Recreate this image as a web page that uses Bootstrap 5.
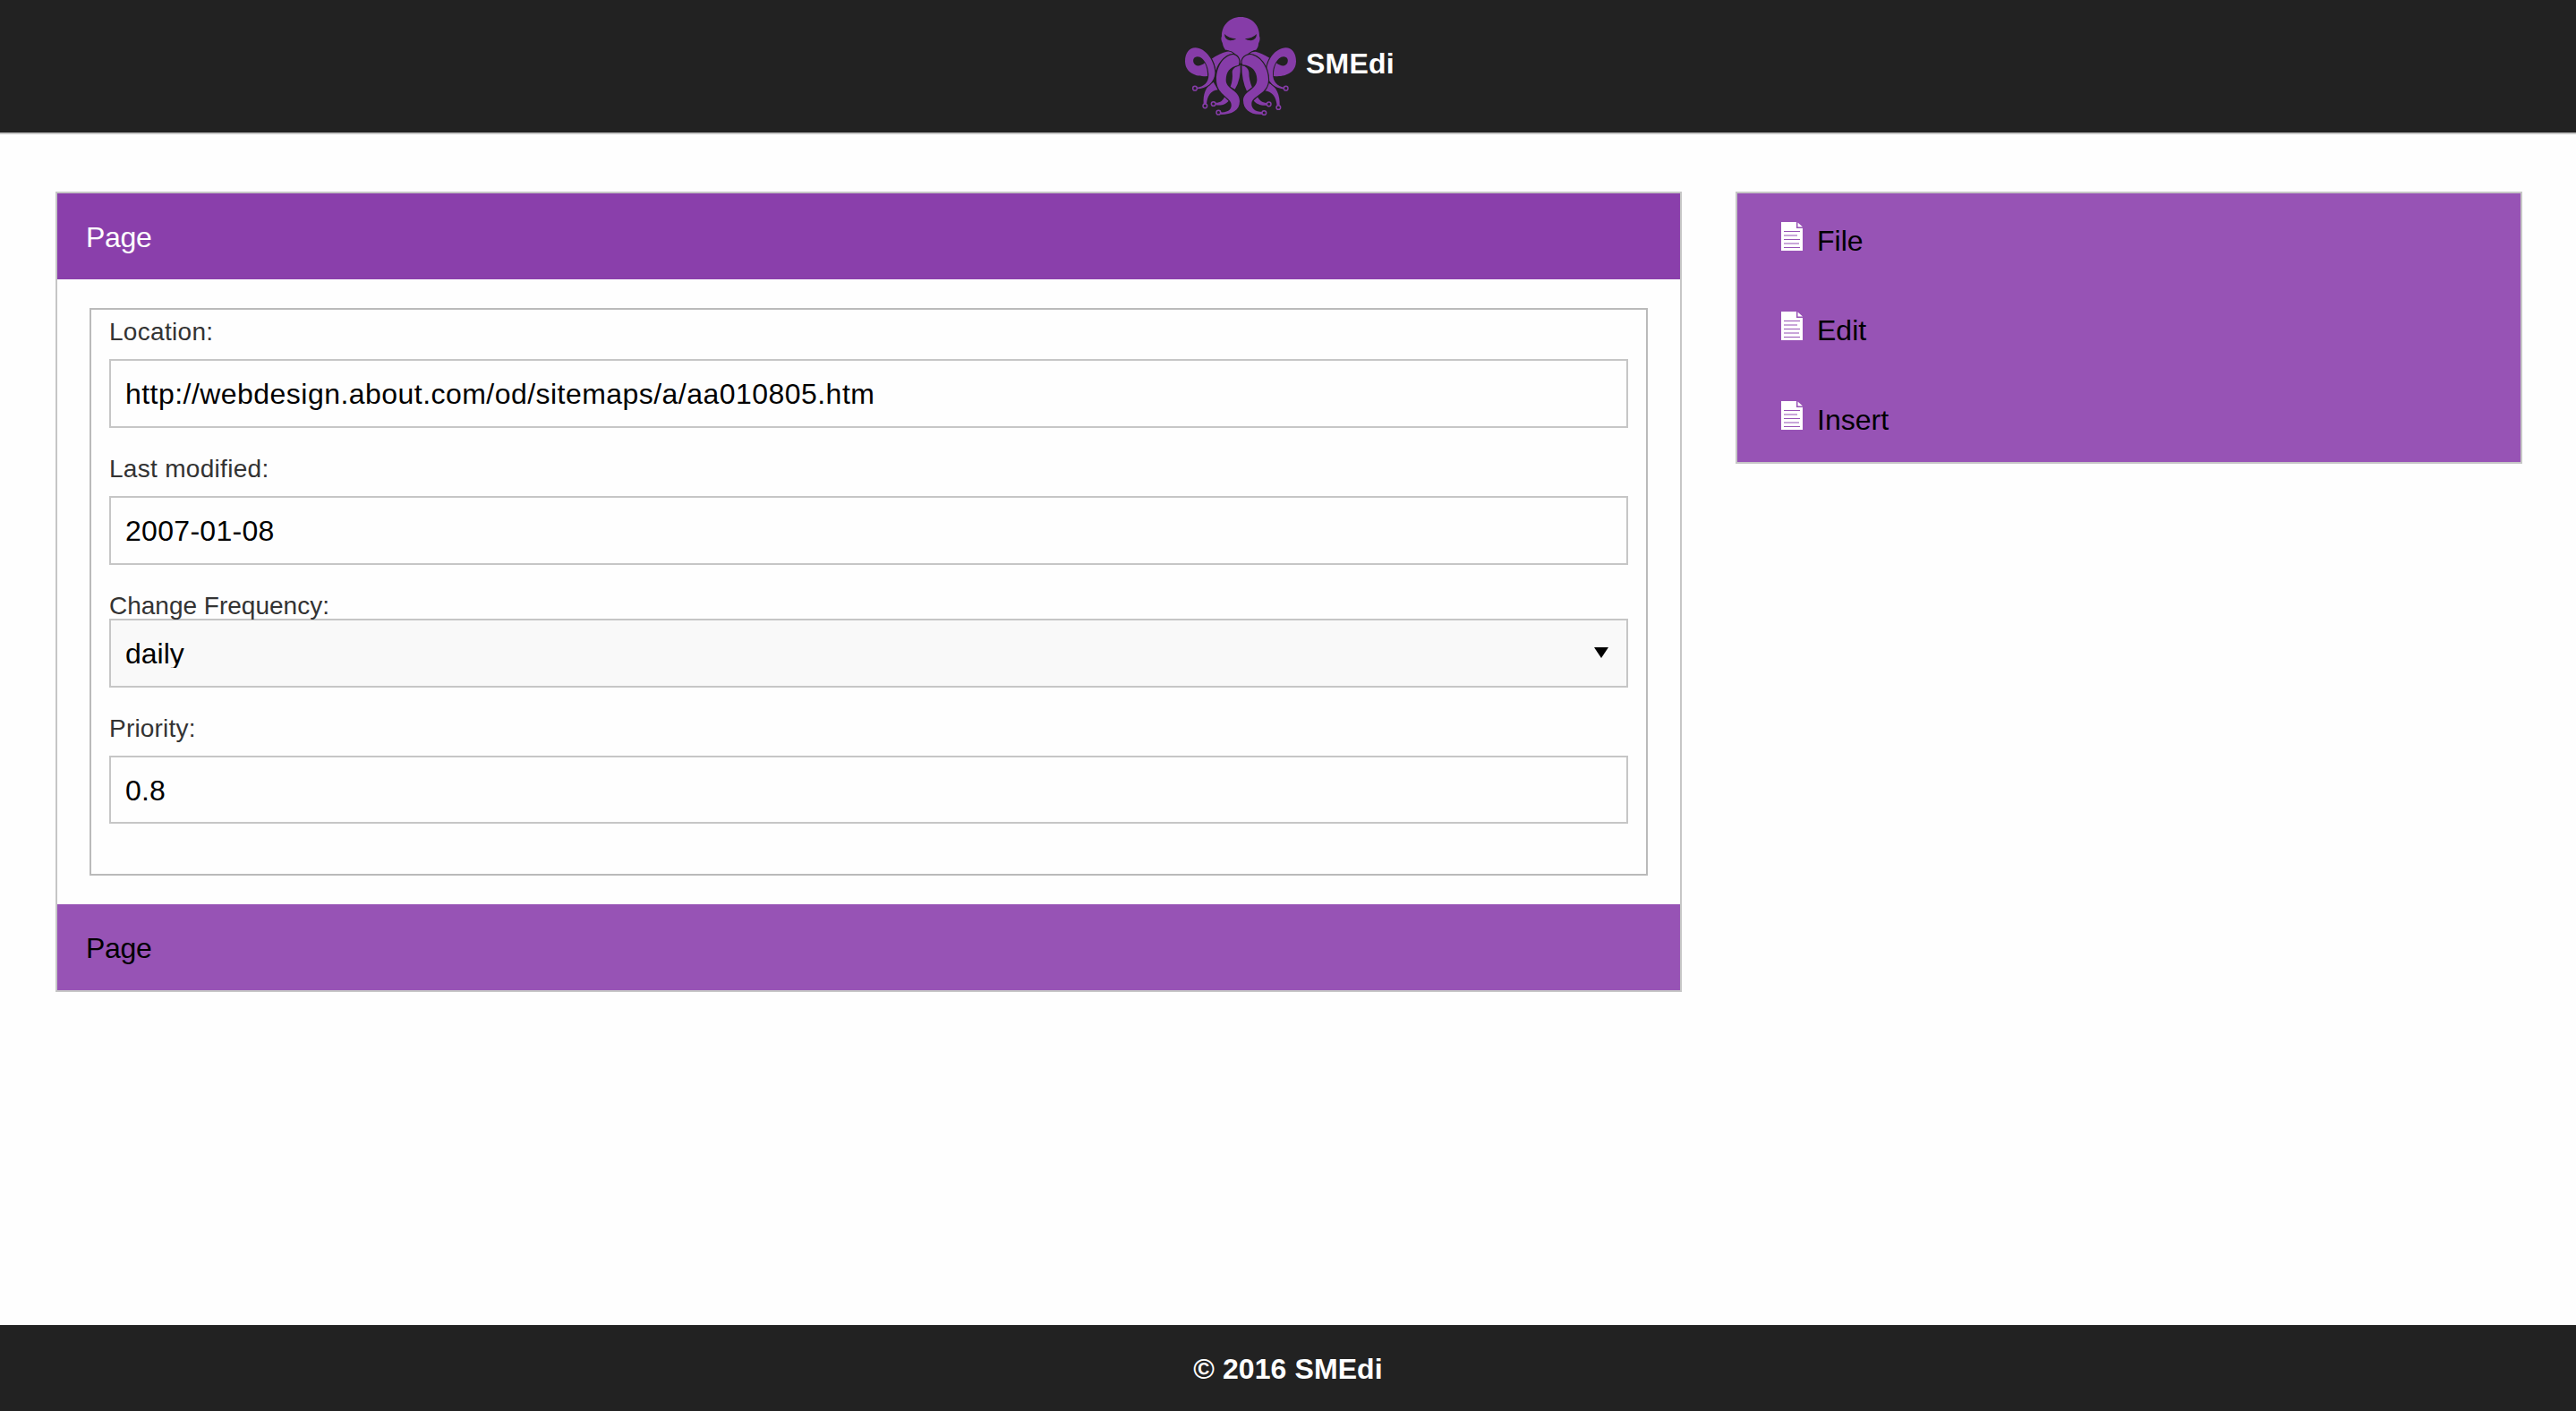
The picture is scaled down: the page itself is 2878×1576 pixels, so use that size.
<!DOCTYPE html>
<html lang="en">
<head>
<meta charset="utf-8">
<meta name="viewport" content="width=device-width, initial-scale=1">
<title>SMEdi</title>
<link rel="stylesheet" href="https://cdn.jsdelivr.net/npm/bootstrap@5.3.0/dist/css/bootstrap.min.css">
<style>
body{font-family:"Liberation Sans",Arial,sans-serif;font-size:32px;line-height:48px;color:#000;background:#fefefe}
.topbar{height:150px;background:#222;border-bottom:2px solid #c6c6c6;padding:16px 0 0 1322px}
.brand-logo{width:128px;height:116px}
.brand-name{margin:31px 0 0 9px;letter-spacing:.2px;color:#fff}
.bottombar{height:96px;background:#222;color:#fff;letter-spacing:.1px;padding-top:2px}
.main-area{padding:64px 60px 0 62px;gap:60px}
.editor{width:1817px;border:2px solid #c6c6c6}
.side-menu{width:879px;height:304px;border:2px solid #c6c6c6;background:#9753b5}
.panel-bar{height:96px;padding:2px 32px 0;letter-spacing:-.3px}
.bar-dark{background:#8a3fab;color:#fff}
.bar-light{background:#9753b5}
.field-box{margin:32px 36px;height:634px;border:2px solid #bababa;padding:0 20px}
.field-label{display:block;font-size:28px;line-height:36px;color:#333;position:relative;z-index:1}
.sitemap-input,.sitemap-select{font-size:32px;color:#000;border:2px solid #c6c6c6;border-radius:0;height:77px}
.sitemap-input{line-height:37px;padding:19px 16px 17px;background:#fefefe}
.sitemap-select{line-height:36px;padding:19px 16px 20px;background-color:#f9f9f9;background-image:none}
.select-arrow{position:absolute;right:22px;top:32px;width:16px;height:12px}
.menu-link{height:100px;padding:0 0 0 49px;color:#000;text-decoration:none}
.menu-link svg{width:24px;height:32px;margin-top:32px}
.menu-link span{margin:29px 0 0 16px}
.l-loc{margin-top:7px;margin-bottom:12px;letter-spacing:.3px}
.l-mod{margin-top:28px;margin-bottom:12px;letter-spacing:.3px}
.l-freq{margin-top:28px;margin-bottom:-4px;letter-spacing:0}
.l-pri{margin-top:28px;margin-bottom:12px;letter-spacing:.2px}
.i-url{letter-spacing:.46px}
.i-date{letter-spacing:.3px}
.i-pri{height:76px;letter-spacing:.2px}
</style>
<script src="https://cdn.jsdelivr.net/npm/bootstrap@5.3.0/dist/js/bootstrap.bundle.min.js"></script>
</head>
<body class="d-flex flex-column min-vh-100">
<svg class="d-none" xmlns="http://www.w3.org/2000/svg">
  <symbol id="page-icon" viewBox="0 0 24 32">
    <path fill="#fff" d="M0 0H17V7H24V32H0ZM18.5 0.5L24 5.5H18.5Z"/>
    <path stroke="#9753b5" d="M3 10.5H21M3 19.5H21M3 28.5H21"/>
    <path stroke="#c9a6da" stroke-width="2" d="M3 15H18M3 24H20"/>
  </symbol>
</svg>

<header class="topbar d-flex align-items-start">
  <svg class="brand-logo" viewBox="36 48 384 348" fill="#863ca8" stroke="#222" stroke-width="7" paint-order="stroke" role="img" aria-label="Octopus">
    <path d="M228 57C268 57 292 87 291 121C295 130 291 141 288 146C288 156 284 161 280 167C264 168 262 178 256 184L229 214L202 184C196 174 190 167 177 167C173 160 168 152 168 146C165 138 161 132 165 121C164 87 190 57 228 57Z"/>
    <path fill="#222" stroke="none" d="M174 114Q188 128 214 130Q205 136 193 136Q175 134 174 114ZM282 114Q268 128 242 130Q251 136 263 136Q281 134 282 114Z"/>
    <path d="M131 197Q160 177 182 173Q195 171 204 180Q158 192 145 236Q141 213 131 197ZM325 194Q298 178 278 173Q265 173 258 180Q300 193 313 235Q316 211 325 194Z"/>
    <path d="M200 240Q203 224 227 218Q230 264 209 299L194 291Q203 268 200 240ZM232 218Q254 224 256 242Q256 268 267 293L249 305Q232 270 232 218Z"/>
    <path d="M137 275C111 289 102 315 104 348H114C117 321 128 303 152 301ZM321 278C348 287 361 320 359 353H350C347 324 333 306 308 304Z"/>
    <path d="M145 344C161 344 169 336 175 323L194 330C180 351 166 354 145 352ZM315 345C300 344 292 337 285 325L268 333C281 351 297 354 315 353Z"/>
    <path d="M42 205C42 177 57 160 76 160C111 160 142 206 142 244C141 277 113 298 82 298V293C103 291 122 278 121 249C120 224 106 191 84 190C71 190 67 201 71 211C76 223 92 224 108 211C115 225 118 241 117 255C78 259 42 244 42 205Z"/>
    <path d="M414 205C414 177 399 160 380 160C345 160 315 202 315 240C315 273 344 297 373 298V293C353 290 336 275 336 247C336 224 350 191 372 190C385 190 389 201 385 211C380 223 364 224 348 211C341 225 338 241 339 255C378 259 414 244 414 205Z"/>
    <path d="M221 218C190 225 180 241 179 268C178 300 225 302 225 339C225 370 199 384 161 384V376C187 378 202 364 196 345C190 325 147 314 147 267C147 220 174 185 204 183C220 187 228 204 221 218Z"/>
    <path d="M235 217C228 202 239 185 260 183C290 186 321 222 321 268C320 315 271 318 265 345C263 363 277 375 300 375V383C264 387 237 368 237 337C237 304 285 301 283 265C282 239 267 220 235 217Z"/>
    <g fill="none" stroke="#863ca8" stroke-width="4.5">
      <circle cx="75" cy="296" r="7"/><circle cx="109" cy="355" r="7"/><circle cx="137" cy="348" r="7"/><circle cx="154" cy="377" r="7"/>
      <circle cx="380" cy="296" r="7"/><circle cx="355" cy="360" r="7"/><circle cx="323" cy="349" r="7"/><circle cx="307" cy="378" r="7"/>
    </g>
  </svg>
  <span class="brand-name fw-bold">SMEdi</span>
</header>

<main class="main-area d-flex align-items-start flex-grow-1">
  <section class="editor">
    <div class="panel-bar bar-dark d-flex align-items-center">Page</div>
    <div class="field-box">
      <label class="field-label l-loc" for="loc">Location:</label>
      <input class="form-control sitemap-input i-url" id="loc" value="http://webdesign.about.com/od/sitemaps/a/aa010805.htm">
      <label class="field-label l-mod" for="mod">Last modified:</label>
      <input class="form-control sitemap-input i-date" id="mod" value="2007-01-08">
      <label class="field-label l-freq" for="freq">Change Frequency:</label>
      <div class="position-relative">
        <select class="form-select sitemap-select" id="freq"><option>daily</option></select>
        <svg class="select-arrow" viewBox="0 0 16 12"><path d="M0 0H16L8 12Z"/></svg>
      </div>
      <label class="field-label l-pri" for="pri">Priority:</label>
      <input class="form-control sitemap-input i-pri" id="pri" value="0.8">
    </div>
    <div class="panel-bar bar-light d-flex align-items-center">Page</div>
  </section>
  <nav class="side-menu">
    <a class="menu-link d-flex align-items-start" href="#"><svg><use href="#page-icon"/></svg><span>File</span></a>
    <a class="menu-link d-flex align-items-start" href="#"><svg><use href="#page-icon"/></svg><span>Edit</span></a>
    <a class="menu-link d-flex align-items-start" href="#"><svg><use href="#page-icon"/></svg><span>Insert</span></a>
  </nav>
</main>

<footer class="bottombar d-flex align-items-center justify-content-center fw-bold">© 2016 SMEdi</footer>
</body>
</html>
